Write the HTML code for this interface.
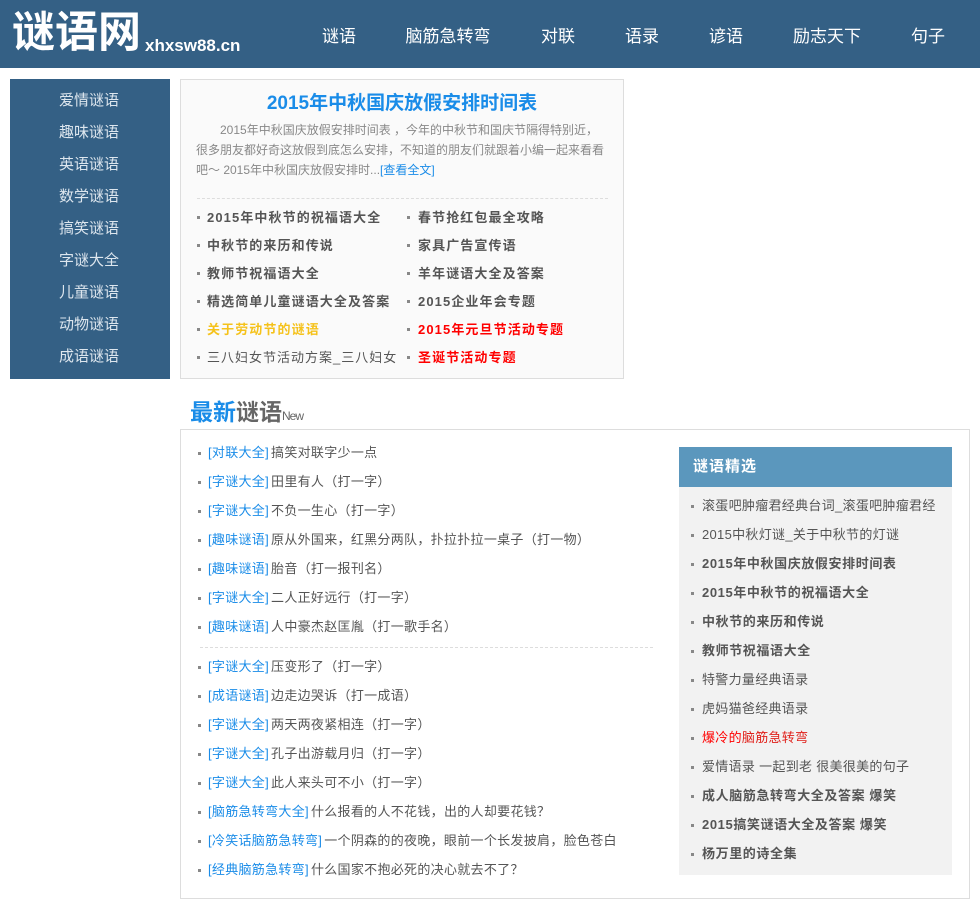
<!DOCTYPE html>
<html><head><meta charset="utf-8"><style>
*{margin:0;padding:0;box-sizing:border-box}
body{width:980px;height:891px;overflow:hidden;background:#fff;position:relative;font-family:"Liberation Sans","Noto Sans CJK SC",sans-serif;color:#555}
.a{position:absolute;white-space:nowrap}
#hd{position:absolute;left:0;top:0;width:980px;height:68px;background:#346085}
.nav{color:#fff;font-size:17px;top:22px;transform:translateX(-50%)}
#side{position:absolute;left:10px;top:79px;width:160px;height:300px;background:#346085;padding-top:6px}
#side div{height:32px;line-height:32px;text-align:center;color:#dde6ee;font-size:15px;margin-left:-2px}
#top{position:absolute;left:180px;top:79px;width:444px;height:300px;background:#fafafa;border:1px solid #ddd}
.l{font-size:13px;font-weight:bold;letter-spacing:1.1px;color:#555}
.b{position:absolute;width:3px;height:3px;background:#888}
#new{position:absolute;left:180px;top:429px;width:790px;height:470px;border:1px solid #ddd}
.r{font-size:13px;color:#555;letter-spacing:.3px}
.r span{color:#1a8ce8;margin-right:2px}
#rb{position:absolute;left:679px;top:447px;width:273px;height:428px;background:#f2f2f2}
#rh{height:40px;background:#5b97bd;color:#fff;font-size:15px;font-weight:bold;line-height:40px;padding-left:14px;letter-spacing:1px}
</style></head><body>
<div id="hd"></div>
<div class="a" style="left:12px;top:8px;font-size:43px;font-weight:bold;color:#fff;line-height:50px">谜语网</div>
<div class="a" style="left:145px;top:36px;font-size:17px;font-weight:bold;color:#fff">xhxsw88.cn</div>
<div class="a nav" style="left:339px">谜语</div>
<div class="a nav" style="left:448px">脑筋急转弯</div>
<div class="a nav" style="left:558px">对联</div>
<div class="a nav" style="left:642px">语录</div>
<div class="a nav" style="left:726px">谚语</div>
<div class="a nav" style="left:827px">励志天下</div>
<div class="a nav" style="left:928px">句子</div>

<div id="side"><div>爱情谜语</div><div>趣味谜语</div><div>英语谜语</div><div>数学谜语</div><div>搞笑谜语</div><div>字谜大全</div><div>儿童谜语</div><div>动物谜语</div><div>成语谜语</div></div>

<div id="top"></div>
<div class="a" style="left:180px;width:444px;text-align:center;top:88px;font-size:19px;font-weight:bold;color:#1a8ce8">2015年中秋国庆放假安排时间表</div>
<div class="a" style="left:196px;top:120px;width:412px;white-space:normal;font-size:12px;line-height:20px;color:#888;text-indent:24px">2015年中秋国庆放假安排时间表 ，今年的中秋节和国庆节隔得特别近，很多朋友都好奇这放假到底怎么安排，不知道的朋友们就跟着小编一起来看看吧～ 2015年中秋国庆放假安排时...<span style="color:#1a8ce8">[查看全文]</span></div>
<div class="a" style="left:197px;top:198px;width:411px;border-top:1px dashed #ddd"></div>

<div class="b" style="left:197px;top:216px"></div><div class="a l" style="left:207px;top:207px">2015年中秋节的祝福语大全</div>
<div class="b" style="left:197px;top:244px"></div><div class="a l" style="left:207px;top:235px">中秋节的来历和传说</div>
<div class="b" style="left:197px;top:272px"></div><div class="a l" style="left:207px;top:263px">教师节祝福语大全</div>
<div class="b" style="left:197px;top:300px"></div><div class="a l" style="left:207px;top:291px">精选简单儿童谜语大全及答案</div>
<div class="b" style="left:197px;top:328px"></div><div class="a l" style="left:207px;top:319px;color:#f5c21b">关于劳动节的谜语</div>
<div class="b" style="left:197px;top:356px"></div><div class="a l" style="left:207px;top:347px;font-weight:normal;letter-spacing:1px">三八妇女节活动方案_三八妇女</div>
<div class="b" style="left:407px;top:216px"></div><div class="a l" style="left:418px;top:207px">春节抢红包最全攻略</div>
<div class="b" style="left:407px;top:244px"></div><div class="a l" style="left:418px;top:235px">家具广告宣传语</div>
<div class="b" style="left:407px;top:272px"></div><div class="a l" style="left:418px;top:263px">羊年谜语大全及答案</div>
<div class="b" style="left:407px;top:300px"></div><div class="a l" style="left:418px;top:291px">2015企业年会专题</div>
<div class="b" style="left:407px;top:328px"></div><div class="a l" style="left:418px;top:319px;color:#f00">2015年元旦节活动专题</div>
<div class="b" style="left:407px;top:356px"></div><div class="a l" style="left:418px;top:347px;color:#f00">圣诞节活动专题</div>

<div class="a" style="left:190px;top:393px;font-size:23px;font-weight:bold;color:#1a8ce8">最新<span style="color:#666">谜语</span><span style="font-size:12px;font-weight:normal;color:#666;letter-spacing:-1px">New</span></div>
<div id="new"></div>

<div class="b" style="left:198px;top:452px"></div><div class="a r" style="left:208px;top:442px"><span>[对联大全]</span>搞笑对联字少一点</div>
<div class="b" style="left:198px;top:481px"></div><div class="a r" style="left:208px;top:471px"><span>[字谜大全]</span>田里有人（打一字）</div>
<div class="b" style="left:198px;top:510px"></div><div class="a r" style="left:208px;top:500px"><span>[字谜大全]</span>不负一生心（打一字）</div>
<div class="b" style="left:198px;top:539px"></div><div class="a r" style="left:208px;top:529px"><span>[趣味谜语]</span>原从外国来，红黑分两队，扑拉扑拉一桌子（打一物）</div>
<div class="b" style="left:198px;top:568px"></div><div class="a r" style="left:208px;top:558px"><span>[趣味谜语]</span>胎音（打一报刊名）</div>
<div class="b" style="left:198px;top:597px"></div><div class="a r" style="left:208px;top:587px"><span>[字谜大全]</span>二人正好远行（打一字）</div>
<div class="b" style="left:198px;top:626px"></div><div class="a r" style="left:208px;top:616px"><span>[趣味谜语]</span>人中豪杰赵匡胤（打一歌手名）</div>
<div class="a" style="left:200px;top:647px;width:453px;border-top:1px dashed #ddd"></div>
<div class="b" style="left:198px;top:666px"></div><div class="a r" style="left:208px;top:656px"><span>[字谜大全]</span>压变形了（打一字）</div>
<div class="b" style="left:198px;top:695px"></div><div class="a r" style="left:208px;top:685px"><span>[成语谜语]</span>边走边哭诉（打一成语）</div>
<div class="b" style="left:198px;top:724px"></div><div class="a r" style="left:208px;top:714px"><span>[字谜大全]</span>两天两夜紧相连（打一字）</div>
<div class="b" style="left:198px;top:753px"></div><div class="a r" style="left:208px;top:743px"><span>[字谜大全]</span>孔子出游载月归（打一字）</div>
<div class="b" style="left:198px;top:782px"></div><div class="a r" style="left:208px;top:772px"><span>[字谜大全]</span>此人来头可不小（打一字）</div>
<div class="b" style="left:198px;top:811px"></div><div class="a r" style="left:208px;top:801px"><span>[脑筋急转弯大全]</span>什么报看的人不花钱，出的人却要花钱？</div>
<div class="b" style="left:198px;top:840px"></div><div class="a r" style="left:208px;top:830px"><span>[冷笑话脑筋急转弯]</span>一个阴森的的夜晚，眼前一个长发披肩，脸色苍白</div>
<div class="b" style="left:198px;top:869px"></div><div class="a r" style="left:208px;top:859px"><span>[经典脑筋急转弯]</span>什么国家不抱必死的决心就去不了？</div>

<div id="rb"><div id="rh">谜语精选</div></div>
<div class="b" style="left:691px;top:505px"></div><div class="a r" style="left:702px;top:495px">滚蛋吧肿瘤君经典台词_滚蛋吧肿瘤君经</div>
<div class="b" style="left:691px;top:534px"></div><div class="a r" style="left:702px;top:524px">2015中秋灯谜_关于中秋节的灯谜</div>
<div class="b" style="left:691px;top:563px"></div><div class="a l" style="left:702px;top:553px;letter-spacing:.6px">2015年中秋国庆放假安排时间表</div>
<div class="b" style="left:691px;top:592px"></div><div class="a l" style="left:702px;top:582px;letter-spacing:.6px">2015年中秋节的祝福语大全</div>
<div class="b" style="left:691px;top:621px"></div><div class="a l" style="left:702px;top:611px;letter-spacing:.6px">中秋节的来历和传说</div>
<div class="b" style="left:691px;top:650px"></div><div class="a l" style="left:702px;top:640px;letter-spacing:.6px">教师节祝福语大全</div>
<div class="b" style="left:691px;top:679px"></div><div class="a r" style="left:702px;top:669px">特警力量经典语录</div>
<div class="b" style="left:691px;top:708px"></div><div class="a r" style="left:702px;top:698px">虎妈猫爸经典语录</div>
<div class="b" style="left:691px;top:737px"></div><div class="a r" style="left:702px;top:727px;color:#f00">爆冷的<span style="color:#e0201a;margin:0">脑筋急转弯</span></div>
<div class="b" style="left:691px;top:766px"></div><div class="a r" style="left:702px;top:756px">爱情语录 一起到老 很美很美的句子</div>
<div class="b" style="left:691px;top:795px"></div><div class="a l" style="left:702px;top:785px;letter-spacing:.6px">成人脑筋急转弯大全及答案 爆笑</div>
<div class="b" style="left:691px;top:824px"></div><div class="a l" style="left:702px;top:814px;letter-spacing:.6px">2015搞笑谜语大全及答案 爆笑</div>
<div class="b" style="left:691px;top:853px"></div><div class="a l" style="left:702px;top:843px;letter-spacing:.6px">杨万里的诗全集</div>
</body></html>
